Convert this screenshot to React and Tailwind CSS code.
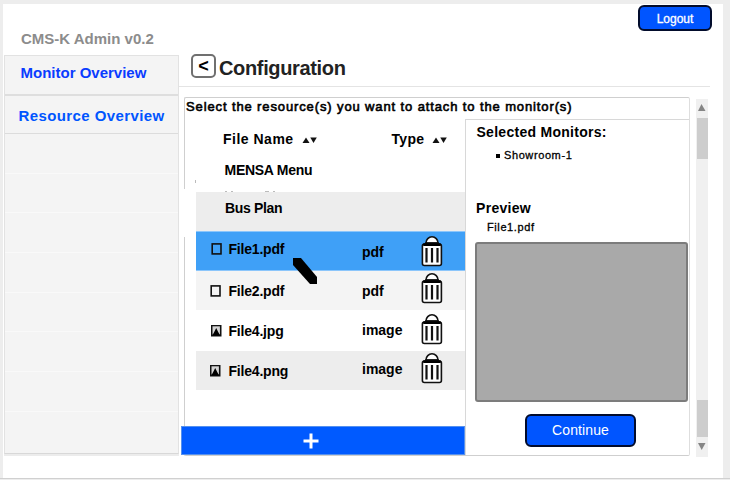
import React from "react";

function Sorter() {
  return (
    <svg width="15" height="6" viewBox="0 0 15 6" className="mt-[2px] block shrink-0">
      <path d="M0.5 6 L4 0.5 L7.5 6 Z" fill="#111" />
      <path d="M8.3 0.5 H14.8 L11.5 6 Z" fill="#111" />
    </svg>
  );
}

function Trash() {
  return (
    <svg width="22" height="32" viewBox="0 0 22 32" className="block shrink-0">
      <path d="M5 8 A6 6.2 0 0 1 17 8 Z" fill="#fff" stroke="#111" strokeWidth="1.6" />
      <path d="M4 8 H18" stroke="#111" strokeWidth="1.4" />
      <rect x="1.4" y="9" width="19" height="21.5" rx="2" fill="#fff" stroke="#111" strokeWidth="1.6" />
      <rect x="2" y="8.2" width="18" height="2.8" rx="1" fill="#000" />
      <path d="M5.5 13 V27.5 M11 13 V27.5 M16.5 13 V27.5" stroke="#111" strokeWidth="2.2" />
    </svg>
  );
}

function Box() {
  return (
    <svg width="11" height="12" viewBox="0 0 11 12" className="block shrink-0">
      <rect x="1.2" y="0.9" width="8.8" height="10" fill="none" stroke="#111" strokeWidth="1.6" />
    </svg>
  );
}

function Picture() {
  return (
    <svg width="11" height="12" viewBox="0 0 11 12" className="block shrink-0">
      <rect width="10.5" height="11.5" fill="#111" />
      <rect x="1.5" y="1.3" width="7.4" height="8.2" fill="#d4d4d4" />
      <path d="M1.3 10.5 L3.2 7 L5.2 3 L7.2 7 L9.2 10.5 Z" fill="#000" />
    </svg>
  );
}

const files = [
  { name: "File1.pdf", type: "pdf", row: "h-[40px] border-y border-[#8cc6fb] bg-[#3fa0f7]", left: "pl-[15px]", icon: <Box />, gap: "gap-[6px]", nameShift: "pb-[4px]", typeShift: "pt-[1px]", trash: "pt-[3px]" },
  { name: "File2.pdf", type: "pdf", row: "h-[39px] bg-[#f4f4f4]", left: "pl-[14px]", icon: <Box />, gap: "gap-[7px]", nameShift: "", typeShift: "", trash: "pt-[1px]" },
  { name: "File4.jpg", type: "image", row: "h-[41px] bg-white", left: "pl-[15px]", icon: <Picture />, gap: "gap-[6px]", nameShift: "", typeShift: "pb-[2px]", trash: "pt-[3px]" },
  { name: "File4.png", type: "image", row: "h-[39px] bg-[#ededed]", left: "pl-[14px]", icon: <Picture />, gap: "gap-[7px]", nameShift: "pt-[1px]", typeShift: "pb-[3px]", trash: "pt-[1px]" },
];

function FileRow({ file }) {
  return (
    <div className={`flex items-stretch ${file.row}`}>
      <div className={`flex w-[166px] items-center tracking-[-0.2px] ${file.left} ${file.gap} ${file.nameShift}`}>
        {file.icon}
        <span className="pl-[0.5px]">{file.name}</span>
      </div>
      <div className={`flex w-[59px] items-center ${file.typeShift}`}>{file.type}</div>
      <div className={file.trash}>
        <Trash />
      </div>
    </div>
  );
}

function Sidebar() {
  return (
    <aside className="w-[176px] shrink-0 pl-px">
      <h1 className="h-[51px] pt-[25px] pl-[17px] text-[15px] leading-[20px] font-bold text-[#8c8c8c]">CMS-K Admin v0.2</h1>
      <nav className="h-[399px] border border-b-[#d8d8d8] border-x-[#e2e2e2] border-t-[#e2e2e2] bg-[#f4f4f4] font-bold text-[15px] shadow-[0_2px_0_#ececec]">
        <a className="block h-[40px] border-b-2 border-[#dedede] pt-[7px] pl-[15.5px] leading-[20px] text-[#0a3cff]">Monitor Overview</a>
        <a className="block h-[38px] border-b border-[#dcdcdc] pt-[10px] pl-[13.5px] leading-[20px] tracking-[0.4px] text-[#0055ff]">Resource Overview</a>
        {[0, 1, 2, 3, 4, 5, 6].map((i) => (
          <div key={i} className="h-[39.7px] border-b border-[#f9f9f9]" />
        ))}
      </nav>
    </aside>
  );
}

function Scrollbar() {
  return (
    <div className="mt-[2px] ml-[6px] flex h-[358px] w-[12px] flex-col items-center bg-[#f0f0f0]">
      <svg width="12" height="19" viewBox="0 0 12 19" className="block shrink-0">
        <path d="M2 12 L5.5 5 L9.5 12 Z" fill="#858585" />
      </svg>
      <div className="h-[41px] w-[11px] bg-[#cdcdcd]" />
      <div className="flex-1" />
      <div className="h-[37px] w-[11px] bg-[#cdcdcd]" />
      <svg width="12" height="20" viewBox="0 0 12 20" className="block shrink-0">
        <path d="M2 6 H9.5 L5.7 13 Z" fill="#858585" />
      </svg>
    </div>
  );
}

function Resources() {
  return (
    <section className="w-[280px] shrink-0 text-[14px] font-bold leading-[16px]">
      <div className="flex h-[39px] items-center pl-[38px] text-[14px]">
        <span className="w-[79px] tracking-[0.5px]">File Name</span>
        <Sorter />
        <span className="ml-[74.5px] w-[40.5px] tracking-[0.3px]">Type</span>
        <Sorter />
      </div>
      <div className="h-[34px] pt-[4px] pl-[39.5px] tracking-[-0.28px]">MENSA Menu</div>
      <div className="ml-[11px]">
        <div className="h-[39px] bg-[#ededed] pt-[8px] pl-[29px] tracking-[-0.35px]">Bus Plan</div>
        <div className="relative">
          {files.map((f) => (
            <FileRow key={f.name} file={f} />
          ))}
          <svg width="24" height="27" viewBox="0 0 24 27" className="absolute top-[27px] left-[97px]">
            <path d="M0 0 H8 L24 19 V26 H17 L0 7 Z" fill="#000" />
          </svg>
        </div>
      </div>
      <button className="mt-[36px] -ml-[4px] flex h-[29px] w-[284px] items-center justify-center border border-[#5590ee] bg-[#005aff] pr-[24px]">
        <svg width="16" height="16" viewBox="0 0 16 16" className="block">
          <path d="M0.5 8 H15.5 M8 0.5 V15.5" stroke="#fff" strokeWidth="3" />
        </svg>
      </button>
    </section>
  );
}

function Details() {
  return (
    <section className="h-[336px] w-[224px] shrink-0 border-t border-l border-[#d8d8d8] pl-[9px]">
      <h3 className="pt-[4px] pl-[1.5px] text-[14px] leading-[16px] font-bold tracking-[0.28px]">Selected Monitors:</h3>
      <div className="mt-[7px] flex items-center gap-[4px] pl-[21px] text-[11px] leading-[16px] tracking-[0.6px] [-webkit-text-stroke:0.3px_black]">
        <span className="mt-px h-[4px] w-[4px] bg-black" />
        Showroom-1
      </div>
      <h3 className="mt-[37px] pl-px text-[14px] leading-[16px] font-bold tracking-[0.3px]">Preview</h3>
      <p className="mt-[3px] pl-[12px] text-[11px] leading-[16px] tracking-[0.6px] [-webkit-text-stroke:0.3px_black]">File1.pdf</p>
      <div className="mt-[7px] h-[160px] w-[213px] rounded-[3px] border-2 border-[#7c7c7c] bg-[#a9a9a9]" />
      <button className="mt-[12px] ml-[50px] flex h-[33px] w-[111px] items-center justify-center rounded-[6px] border-2 border-[#020c2c] bg-[#0055ff] pb-px text-[14px] tracking-[0.1px] text-white">
        Continue
      </button>
    </section>
  );
}

export default function App() {
  return (
    <div className="h-[480px] w-[730px] overflow-hidden bg-[#ededed] pt-[4px] font-['Liberation_Sans',Arial,sans-serif] text-black">
      <div className="mr-[7px] ml-[3px] flex h-[474px] bg-white">
        <Sidebar />
        <main className="w-[544px] shrink-0">
          <header className="flex h-[83px] w-[531px] justify-between border-b border-[#e4e4e4]">
            <div className="mt-[50px] ml-[12px] flex h-[24px] gap-[3px]">
              <button className="flex h-[24px] w-[25px] items-center justify-center rounded-[5px] border-2 border-[#707070] text-[18px] font-bold leading-none">&lt;</button>
              <h2 className="pt-[2px] text-[20px] font-bold tracking-[-0.35px] leading-[24px] text-[#222]">Configuration</h2>
            </div>
            <button className="mt-[1px] -mr-[2px] flex h-[26px] w-[74px] items-center justify-center rounded-[6px] border-2 border-[#020c2c] bg-[#0055ff] pt-[2px] text-[12px] text-white [-webkit-text-stroke:0.3px_white]">
              Logout
            </button>
          </header>
          <div className="flex pt-[10px] pl-[5px]">
            <div className="relative h-[359px] w-[506px] rounded-[2px] border border-[#cfcfcf] border-r-[#dedede]">
              <span className="absolute top-[91px] -left-px h-[48px] w-px bg-white" />
              <span className="absolute top-[82px] left-[10px] h-[3px] w-px bg-[#bbb]" />
              <span className="absolute top-[93px] left-[40px] flex gap-[4px]">
                <i className="h-px w-[2px] bg-[#bbb]" />
                <i className="h-px w-[2px] bg-[#bbb]" />
                <i className="ml-[28px] h-px w-[4px] bg-[#bbb]" />
                <i className="h-px w-[2px] bg-[#bbb]" />
              </span>
              <p className="h-[21px] pl-px text-[13px] leading-[18px] tracking-[0.88px] whitespace-nowrap [-webkit-text-stroke:0.6px_black]">
                Select the resource(s) you want to attach to the monitor(s)
              </p>
              <div className="flex">
                <Resources />
                <Details />
              </div>
            </div>
            <Scrollbar />
          </div>
        </main>
      </div>
      <div className="h-px bg-[#d0d0d0]" />
    </div>
  );
}
